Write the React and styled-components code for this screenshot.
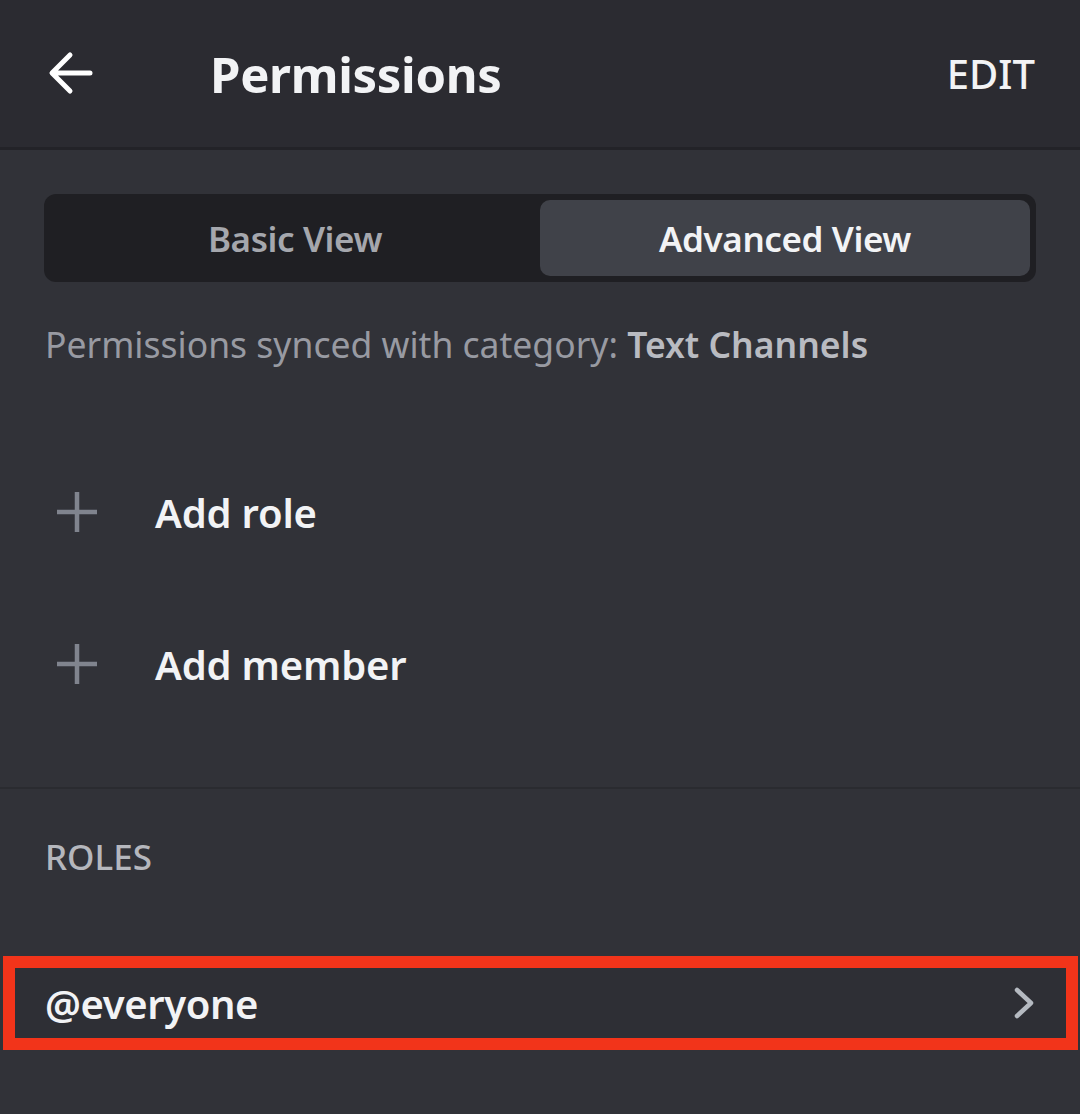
import React from 'react';
import styled, { createGlobalStyle } from 'styled-components';

const GlobalStyle = createGlobalStyle`
  html, body {
    margin: 0;
    padding: 0;
    background: #313238;
  }
  body {
    font-family: "Noto Sans", "Open Sans", sans-serif;
    -webkit-font-smoothing: antialiased;
  }
`;

const Screen = styled.div`
  width: 1080px;
  height: 1114px;
  background: #313238;
  overflow: hidden;
`;

const Header = styled.header`
  height: 147px;
  display: flex;
  align-items: center;
  padding: 0 45px 0 48px;
  background: #2b2b31;
  border-bottom: 3px solid #232328;
`;

const BackButton = styled.button`
  width: 46px;
  height: 46px;
  padding: 0;
  border: none;
  background: none;
  display: flex;
  align-items: center;
  justify-content: center;
  margin-right: 116px;
  margin-top: -2px;
`;

const Title = styled.h1`
  flex: 1;
  margin: 0;
  font-size: 49px;
  font-weight: 700;
  color: #f2f3f5;
  letter-spacing: -0.3px;
`;

const EditButton = styled.button`
  border: none;
  background: none;
  padding: 0;
  font-family: inherit;
  font-size: 40px;
  font-weight: 500;
  color: #f2f3f5;
`;

const Body = styled.main`
  padding: 44px 44px 0;
`;

const Segmented = styled.div`
  height: 88px;
  box-sizing: border-box;
  padding: 6px;
  display: grid;
  grid-template-columns: 1fr 1fr;
  background: #1f1f23;
  border-radius: 12px;
`;

const Segment = styled.div`
  display: flex;
  align-items: center;
  justify-content: center;
  border-radius: 10px;
  font-size: 35px;
  font-weight: 600;
  letter-spacing: -0.4px;
  color: ${p => (p.$active ? '#f2f3f5' : '#a5a7ad')};
  background: ${p => (p.$active ? '#404249' : 'transparent')};
`;

const SyncNote = styled.p`
  margin: 40px 0 0 1px;
  font-size: 35.5px;
  font-weight: 400;
  color: #989aa2;
  line-height: 44px;

  strong {
    font-weight: 600;
    color: #b9bbc1;
  }
`;

const AddList = styled.div`
  margin-top: 70px;
`;

const AddRow = styled.div`
  height: 152px;
  display: flex;
  align-items: center;
  padding-left: 13px;
  gap: 58px;
  font-size: 40px;
  font-weight: 600;
  color: #f2f3f5;
  letter-spacing: -0.2px;
`;

const Divider = styled.hr`
  margin: 47px -44px 0;
  border: none;
  height: 2px;
  background: #2a2b30;
`;

const SectionLabel = styled.h2`
  margin: 48px 0 0 1px;
  font-size: 35px;
  font-weight: 500;
  color: #b5b7bd;
  line-height: 40px;
`;

const Highlight = styled.div`
  margin: 79px -42px 0 -41px;
  border: 12px solid #f2341a;
  height: 94px;
  box-sizing: border-box;
`;

const RoleRow = styled.div`
  height: 100%;
  display: flex;
  align-items: center;
  justify-content: space-between;
  padding: 0 31px 0 30px;
  background: #2e2f35;
  font-size: 40px;
  font-weight: 600;
  color: #f2f3f5;
  letter-spacing: -0.4px;
`;

const ArrowLeft = () => (
  <svg width="46" height="46" viewBox="0 0 46 46" fill="none">
    <path d="M42 23H5M22 5L4 23l18 18" stroke="#fff" strokeWidth="5" strokeLinecap="round" strokeLinejoin="round" />
  </svg>
);

const Plus = () => (
  <svg width="40" height="42" viewBox="0 0 40 42" fill="none">
    <path d="M20 1v40M0 21h40" stroke="#80848e" strokeWidth="4.5" />
  </svg>
);

const Chevron = () => (
  <svg width="22" height="32" viewBox="0 0 22 32" fill="none">
    <path d="M4 3l14 13L4 29" stroke="#b5bac1" strokeWidth="4.5" strokeLinecap="round" strokeLinejoin="round" />
  </svg>
);

export default function App() {
  return (
    <Screen>
      <GlobalStyle />
      <Header>
        <BackButton aria-label="Back">
          <ArrowLeft />
        </BackButton>
        <Title>Permissions</Title>
        <EditButton>EDIT</EditButton>
      </Header>
      <Body>
        <Segmented>
          <Segment>Basic View</Segment>
          <Segment $active>Advanced View</Segment>
        </Segmented>
        <SyncNote>
          Permissions synced with category: <strong>Text Channels</strong>
        </SyncNote>
        <AddList>
          <AddRow>
            <Plus />
            Add role
          </AddRow>
          <AddRow>
            <Plus />
            Add member
          </AddRow>
        </AddList>
        <Divider />
        <SectionLabel>ROLES</SectionLabel>
        <Highlight>
          <RoleRow>
            @everyone
            <Chevron />
          </RoleRow>
        </Highlight>
      </Body>
    </Screen>
  );
}
